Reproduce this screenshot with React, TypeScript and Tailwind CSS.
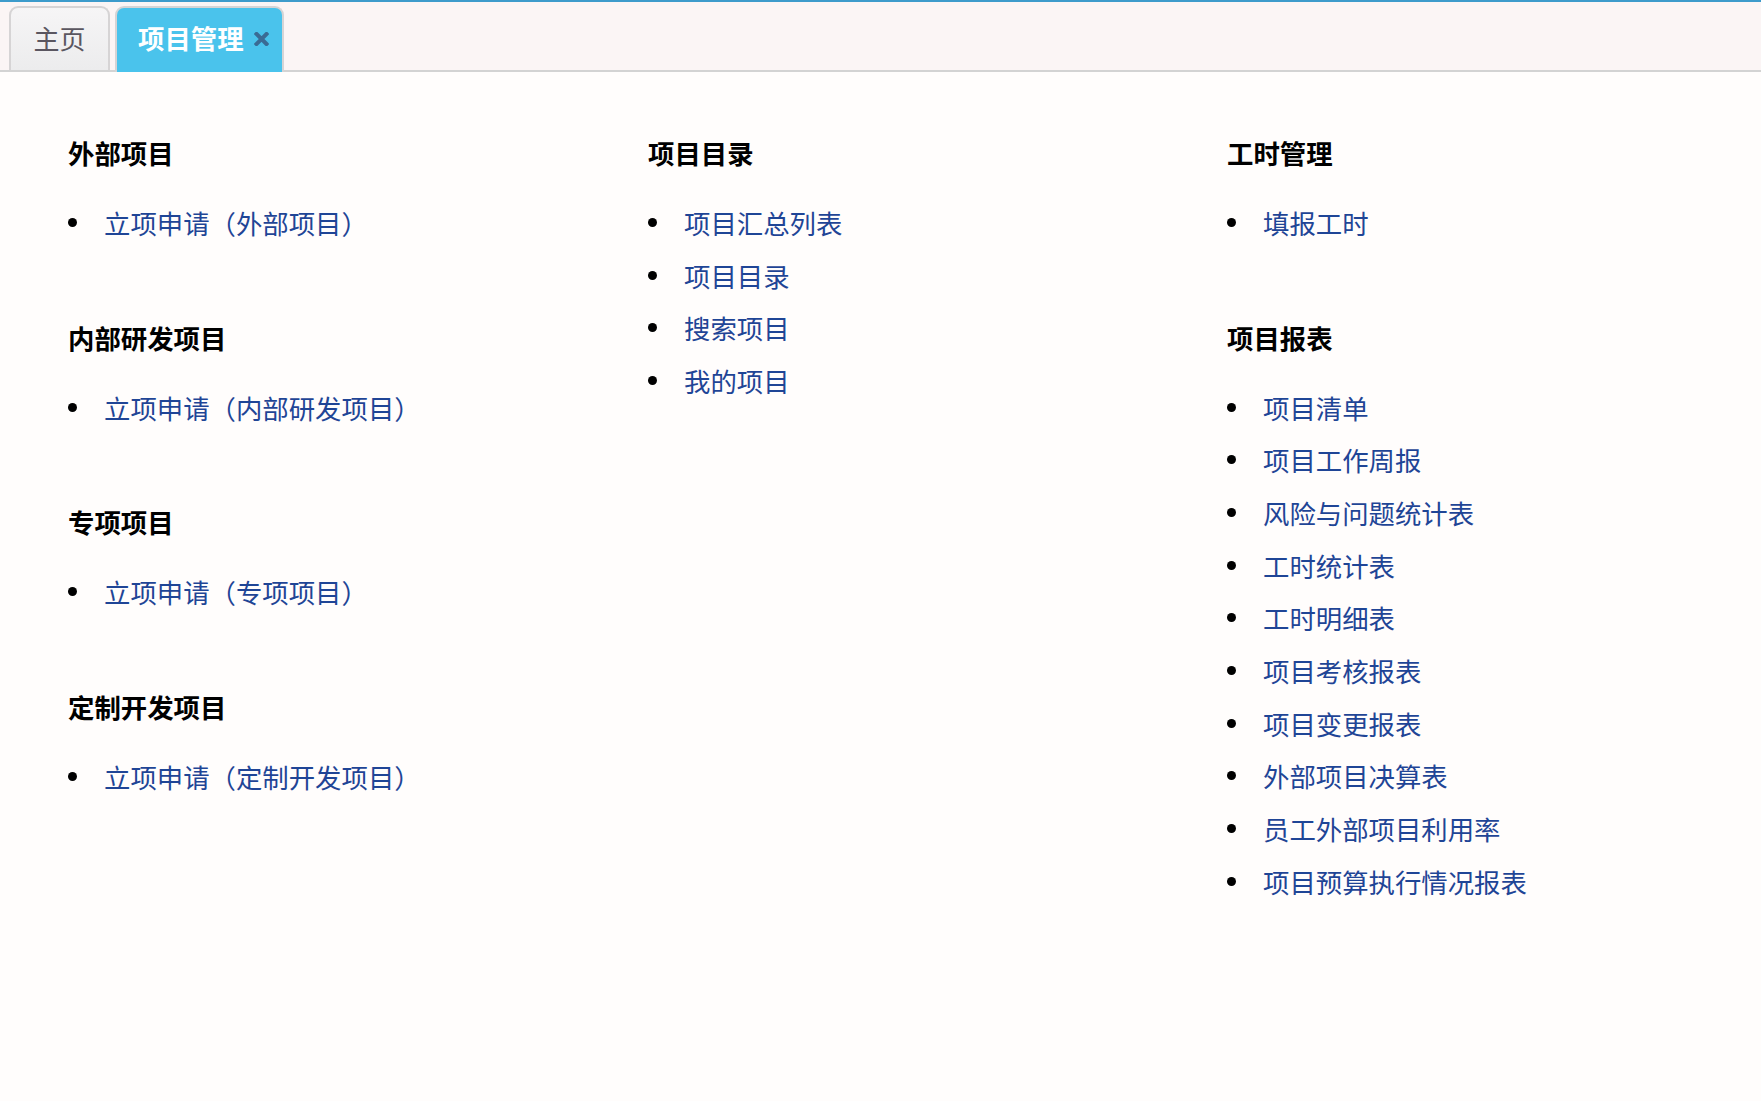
import React from "react";

type Section = { title: string; links: string[] };

const columns: Section[][] = [
  [
    { title: "外部项目", links: ["立项申请（外部项目）"] },
    { title: "内部研发项目", links: ["立项申请（内部研发项目）"] },
    { title: "专项项目", links: ["立项申请（专项项目）"] },
    { title: "定制开发项目", links: ["立项申请（定制开发项目）"] },
  ],
  [
    { title: "项目目录", links: ["项目汇总列表", "项目目录", "搜索项目", "我的项目"] },
  ],
  [
    { title: "工时管理", links: ["填报工时"] },
    {
      title: "项目报表",
      links: [
        "项目清单",
        "项目工作周报",
        "风险与问题统计表",
        "工时统计表",
        "工时明细表",
        "项目考核报表",
        "项目变更报表",
        "外部项目决算表",
        "员工外部项目利用率",
        "项目预算执行情况报表",
      ],
    },
  ],
];

function MenuSection({ section }: { section: Section }) {
  return (
    <div className="mb-[73px]">
      <h3 className="text-[26.4px] leading-[31px] font-bold text-black">{section.title}</h3>
      <ul className="mt-[28px]">
        {section.links.map((link) => (
          <li key={link} className="flex items-center h-[52.7px]">
            <span className="w-[9px] h-[9px] rounded-full bg-black shrink-0" />
            <a href="#" className="ml-[27px] text-[26.4px] leading-[31px] text-[#1f4596]">
              {link}
            </a>
          </li>
        ))}
      </ul>
    </div>
  );
}

export default function App() {
  return (
    <div
      className="min-h-[1101px] bg-[#fffdfc]"
      style={{ fontFamily: '"Noto Sans CJK SC", "Noto Sans", sans-serif' }}
    >
      {/* Tab bar */}
      <div className="h-[72px] border-t-2 border-b-2 border-[#3d9bcb] border-b-[#d3d3d3] bg-[#fbf5f5] flex items-end gap-[5px] pl-[9px]">
        <div className="h-[64px] w-[101px] rounded-t-[9px] border-2 border-b-0 border-[#d6d4d5] bg-gradient-to-b from-[#f6f5f6] to-[#ececed] flex items-center justify-center pb-[4px] text-[26px] text-[#5a5660]">
          主页
        </div>
        <div className="relative -mb-[2px] h-[66px] w-[169px] rounded-t-[9px] border-2 border-b-0 border-[#d6d4d5] bg-[#4ac3ec] flex items-center pl-[21px] pb-[5px]">
          <span className="text-[26.4px] font-bold text-white">项目管理</span>
          <svg className="ml-[10px] mt-[2px]" width="15" height="14" viewBox="0 0 15 14">
            <path d="M2.5 2 L12.5 12 M12.5 2 L2.5 12" stroke="#3a6b94" strokeWidth="4" strokeLinecap="square" />
          </svg>
        </div>
      </div>

      {/* Content */}
      <div className="grid grid-cols-[580px_579px_1fr] pl-[68px] pt-[65px]">
        {columns.map((col, i) => (
          <div key={i}>
            {col.map((s) => (
              <MenuSection key={s.title} section={s} />
            ))}
          </div>
        ))}
      </div>
    </div>
  );
}
